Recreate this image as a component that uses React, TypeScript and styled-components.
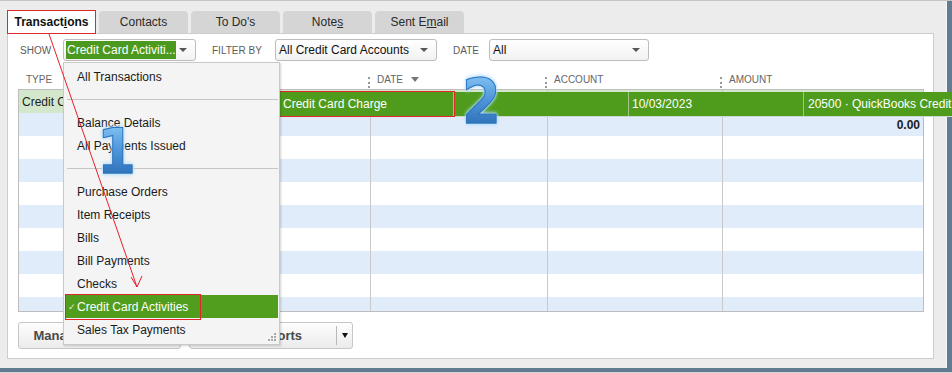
import React from 'react'
import styled, { createGlobalStyle } from 'styled-components'

const GlobalStyle = createGlobalStyle`
    html, body {
        margin: 0;
        padding: 0;
        background: #ececec;
    }
    body {
        font-family: "Liberation Sans", Arial, sans-serif;
    }
`

const Frame = styled.div`
    position: relative;
    width: 952px;
    height: 373px;
    overflow: hidden;
    display: flex;
    flex-direction: column;
    background: #ececec;
    font-family: "Liberation Sans", Arial, sans-serif;
    color: #1c1c1c;
`

const TopLine = styled.div`
    height: 1px;
    background: #c4c4c4;
`

const Body = styled.div`
    display: flex;
    flex: 1;
`

const Main = styled.div`
    flex: 1;
    padding: 9px 0 0 7px;
`

const RightBar = styled.div`
    width: 5px;
    border-left: 1px solid #f7f7f7;
    background: #617b91;
`

const BottomBar = styled.div`
    height: 5px;
    box-sizing: border-box;
    background: #617b91;
    border-bottom: 1px solid #d6d6d6;
`

const TabRow = styled.div`
    display: flex;
    align-items: flex-end;
    gap: 3px;
    height: 23px;
`

const Tab = styled.div<{ $active?: boolean }>`
    position: relative;
    z-index: 1;
    box-sizing: border-box;
    width: 89px;
    height: ${ ({ $active }) => $active ? '24px' : '22px' };
    margin-bottom: ${ ({ $active }) => $active ? '-1px' : '0' };
    display: flex;
    align-items: center;
    justify-content: center;
    background: ${ ({ $active }) => $active ? '#fff' : '#d5d5d5' };
    border: ${ ({ $active }) => $active ? '1px solid #e3262b' : 'none' };
    border-radius: ${ ({ $active }) => $active ? '0' : '4px 4px 0 0' };
    font-size: 12px;
    font-weight: ${ ({ $active }) => $active ? 700 : 400 };
    color: ${ ({ $active }) => $active ? '#111' : '#2a2a2a' };
`

const Panel = styled.div`
    position: relative;
    box-sizing: border-box;
    width: 927px;
    height: 326px;
    background: #fff;
    border: 1px solid #cdcdcd;
    padding: 0 9px 0 10px;
    display: flex;
    flex-direction: column;
`

const FilterRow = styled.div`
    display: flex;
    align-items: center;
    margin-top: 5px;
    height: 22px;
    padding-left: 2px;
`

const FilterLabel = styled.span<{ $w: number }>`
    width: ${ ({ $w }) => $w }px;
    font-size: 10px;
    color: #5c5c5c;
`

const Select = styled.div<{ $w: number }>`
    box-sizing: border-box;
    width: ${ ({ $w }) => $w }px;
    height: 22px;
    margin-right: 16px;
    padding: 0 2px;
    display: flex;
    align-items: center;
    border: 1px solid #bdbdbd;
    border-radius: 3px;
    background: linear-gradient(#ffffff, #f2f2f2);
    font-size: 12px;
    color: #111;
`

const SelectText = styled.span<{ $selected?: boolean }>`
    height: 18px;
    line-height: 18px;
    padding: 0 1px;
    width: ${ ({ $selected }) => $selected ? '108px' : 'auto' };
    background: ${ ({ $selected }) => $selected ? '#4b9a1f' : 'transparent' };
    color: ${ ({ $selected }) => $selected ? '#fff' : '#111' };
    white-space: nowrap;
`

const Caret = styled.span`
    margin-left: auto;
    margin-right: 6px;
    width: 0;
    height: 0;
    border-left: 4px solid transparent;
    border-right: 4px solid transparent;
    border-top: 4px solid #555;
`

const COLS = '177px 175px 177px 175px 1fr'

const HeadRow = styled.div`
    display: grid;
    grid-template-columns: ${ COLS };
    align-items: center;
    margin: 9px 1px 0 1px;
    height: 19px;
`

const HeadCell = styled.div<{ $first?: boolean }>`
    position: relative;
    display: flex;
    align-items: center;
    padding-left: ${ ({ $first }) => $first ? '7px' : '6px' };
    font-size: 10px;
    color: #666;

    &::before {
        content: '';
        display: ${ ({ $first }) => $first ? 'none' : 'block' };
        position: absolute;
        left: -3px;
        top: 3px;
        height: 11px;
        border-left: 2px dotted #999;
    }
`

const SortArrow = styled.span`
    margin-left: 8px;
    width: 0;
    height: 0;
    border-left: 4px solid transparent;
    border-right: 4px solid transparent;
    border-top: 5px solid #777;
`

const Table = styled.div`
    box-sizing: border-box;
    height: 223px;
    border: 1px solid #bdbdbd;
    overflow: hidden;
`

const Row = styled.div<{ $tone: 'green' | 'blue' | 'white' }>`
    display: grid;
    grid-template-columns: ${ COLS };
    height: 23px;
    background: ${ ({ $tone }) => $tone === 'green' ? '#d3e7cc' : $tone === 'blue' ? '#e1ecfb' : '#fff' };
`

const Cell = styled.div<{ $right?: boolean; $bold?: boolean }>`
    box-sizing: border-box;
    padding: 0 3px;
    line-height: 24px;
    font-size: 12px;
    font-weight: ${ ({ $bold }) => $bold ? 700 : 400 };
    text-align: ${ ({ $right }) => $right ? 'right' : 'left' };
    white-space: nowrap;
    overflow: hidden;
    border-right: 1px solid #c9c9c9;

    &:last-child {
        border-right: none;
    }
`

const ButtonRow = styled.div`
    display: flex;
    gap: 8px;
    margin-top: 10px;
`

const Button = styled.div<{ $w: number }>`
    box-sizing: border-box;
    width: ${ ({ $w }) => $w }px;
    height: 27px;
    display: flex;
    border: 1px solid #c6c6c6;
    border-radius: 3px;
    background: linear-gradient(#fefefe, #ebebeb);
    font-size: 13px;
    font-weight: 700;
    color: #4a4a4a;
`

const ButtonLabel = styled.span`
    flex: 1;
    display: flex;
    align-items: center;
    justify-content: center;
`

const ButtonDrop = styled.span`
    width: 15px;
    margin: 3px 0;
    border-left: 1px solid #b8b8b8;
    display: flex;
    align-items: center;
    justify-content: center;

    &::after {
        content: '';
        border-left: 3px solid transparent;
        border-right: 3px solid transparent;
        border-top: 5px solid #111;
    }
`

/* overlays: menu, dragged row, annotations */

const Menu = styled.div`
    position: absolute;
    left: 63px;
    top: 62px;
    z-index: 3;
    box-sizing: border-box;
    width: 217px;
    height: 283px;
    padding: 2px 0 3px;
    background: #f4f4f4;
    border: 1px solid #c9c9c9;
    box-shadow: 1px 1px 2px rgba(0, 0, 0, 0.18);
`

const MenuItem = styled.div<{ $checked?: boolean }>`
    position: relative;
    height: 23px;
    line-height: 25px;
    margin: 0 1px 0 2px;
    padding-left: 11px;
    font-size: 12px;
    color: ${ ({ $checked }) => $checked ? '#fff' : '#1a1a1a' };
    background: ${ ({ $checked }) => $checked ? '#519e1e' : 'transparent' };

    &::after {
        content: '';
        display: ${ ({ $checked }) => $checked ? 'block' : 'none' };
        position: absolute;
        left: -1px;
        top: -1px;
        width: 134px;
        height: 24px;
        border: 1px solid #e3262b;
    }
`

const Check = styled.span`
    position: absolute;
    left: 2px;
    top: 0;
    font-family: "DejaVu Sans", sans-serif;
    font-size: 9px;
    color: #e8e8e8;
`

const MenuSeparator = styled.div`
    height: 23px;
    display: flex;
    align-items: center;
    margin: 0 1px 0 3px;

    &::after {
        content: '';
        flex: 1;
        border-top: 1px solid #c6c6c6;
    }
`

const Grip = styled.svg`
    position: absolute;
    right: 3px;
    bottom: 3px;
`

const DragRow = styled.div`
    position: absolute;
    left: 280px;
    top: 92px;
    z-index: 2;
    width: 700px;
    height: 24px;
    display: flex;
    background: #4f9c1c;
    box-shadow: 0 1px 0 #cdd8cd;
    color: #fff;
    font-size: 12px;
`

const DragCell = styled.div<{ $w?: number; $marked?: boolean }>`
    box-sizing: border-box;
    flex: none;
    width: ${ ({ $w }) => $w ? `${ $w }px` : 'auto' };
    padding-left: ${ ({ $w }) => $w ? '3px' : '4px' };
    line-height: 24px;
    white-space: nowrap;
    border-right: ${ ({ $w }) => $w ? '1px solid rgba(255,255,255,0.45)' : 'none' };
    outline: ${ ({ $marked }) => $marked ? '1px solid #e3262b' : 'none' };
`

const StepMark = styled.span<{ $x: number; $y: number }>`
    position: absolute;
    left: ${ ({ $x }) => $x }px;
    top: ${ ({ $y }) => $y }px;
    z-index: 4;
    font-family: "DejaVu Sans", sans-serif;
    font-weight: 700;
    font-size: 62px;
    line-height: 1;
    transform: scaleX(0.9);
    transform-origin: left top;
    color: transparent;
    background: linear-gradient(#8ccaf6 0%, #4f97dc 45%, #2466ad 100%);
    -webkit-background-clip: text;
    background-clip: text;
    -webkit-text-stroke: 1px #2f74bb;
    filter: drop-shadow(0 0 1px #bfe4ff) drop-shadow(0 0 2px #a7d8ff);
`

const Annotation = styled.svg`
    position: absolute;
    left: 0;
    top: 0;
    z-index: 5;
    pointer-events: none;
`

const rows = [
    { type: 'Credit Card Charge', num: '', date: '10/03/2023', account: '20500 · QuickBooks Credit Card', amount: '' },
    { type: '', num: '', date: '', account: '', amount: '0.00' },
    ...Array.from({ length: 8 }, () => ({ type: '', num: '', date: '', account: '', amount: '' }))
]

const menuEntries = [
    'All Transactions', '-', 'Balance Details', 'All Payments Issued', '-',
    'Purchase Orders', 'Item Receipts', 'Bills', 'Bill Payments', 'Checks',
    'Credit Card Activities', 'Sales Tax Payments'
]

export default function App() {
    return (
        <Frame>
            <GlobalStyle />
            <TopLine />
            <Body>
                <Main>
                    <TabRow>
                        <Tab $active>Transact<u>i</u>ons</Tab>
                        <Tab>Contacts</Tab>
                        <Tab>To Do's</Tab>
                        <Tab>Note<u>s</u></Tab>
                        <Tab>Sent E<u>m</u>ail</Tab>
                    </TabRow>
                    <Panel>
                        <FilterRow>
                            <FilterLabel $w={ 43 }>SHOW</FilterLabel>
                            <Select $w={ 133 }>
                                <SelectText $selected>Credit Card Activiti...</SelectText>
                                <Caret />
                            </Select>
                            <FilterLabel $w={ 63 }>FILTER BY</FilterLabel>
                            <Select $w={ 162 }>
                                <SelectText>All Credit Card Accounts</SelectText>
                                <Caret />
                            </Select>
                            <FilterLabel $w={ 36 }>DATE</FilterLabel>
                            <Select $w={ 160 }>
                                <SelectText>All</SelectText>
                                <Caret />
                            </Select>
                        </FilterRow>

                        <HeadRow>
                            <HeadCell $first>TYPE</HeadCell>
                            <HeadCell>NUM</HeadCell>
                            <HeadCell>DATE<SortArrow /></HeadCell>
                            <HeadCell>ACCOUNT</HeadCell>
                            <HeadCell>AMOUNT</HeadCell>
                        </HeadRow>

                        <Table>
                            { rows.map((r, i) => (
                                <Row key={ i } $tone={ i === 0 ? 'green' : i % 2 ? 'blue' : 'white' }>
                                    <Cell>{ r.type }</Cell>
                                    <Cell>{ r.num }</Cell>
                                    <Cell>{ r.date }</Cell>
                                    <Cell>{ r.account }</Cell>
                                    <Cell $right $bold>{ r.amount }</Cell>
                                </Row>
                            )) }
                        </Table>

                        <ButtonRow>
                            <Button $w={ 163 }>
                                <ButtonLabel>Manage Transactions</ButtonLabel>
                            </Button>
                            <Button $w={ 164 }>
                                <ButtonLabel>Run Reports</ButtonLabel>
                                <ButtonDrop />
                            </Button>
                        </ButtonRow>
                    </Panel>
                </Main>
                <RightBar />
            </Body>
            <BottomBar />

            <Menu>
                { menuEntries.map((m, i) => m === '-'
                    ? <MenuSeparator key={ i } />
                    : (
                        <MenuItem key={ i } $checked={ m === 'Credit Card Activities' }>
                            { m === 'Credit Card Activities' && <Check>✓</Check> }
                            { m }
                        </MenuItem>
                    )) }
                <Grip width="9" height="9" viewBox="0 0 9 9">
                    <g fill="#a8a8a8">
                        <rect x="7" y="1" width="2" height="2" />
                        <rect x="4" y="4" width="2" height="2" />
                        <rect x="7" y="4" width="2" height="2" />
                        <rect x="1" y="7" width="2" height="2" />
                        <rect x="4" y="7" width="2" height="2" />
                        <rect x="7" y="7" width="2" height="2" />
                    </g>
                </Grip>
            </Menu>

            <DragRow>
                <DragCell $w={ 174 } $marked>Credit Card Charge</DragCell>
                <DragCell $w={ 175 } />
                <DragCell $w={ 175 }>10/03/2023</DragCell>
                <DragCell>20500 · QuickBooks Credit Card</DragCell>
            </DragRow>

            <StepMark $x={ 97 } $y={ 121 }>1</StepMark>
            <StepMark $x={ 462 } $y={ 71 }>2</StepMark>

            <Annotation width="952" height="373" viewBox="0 0 952 373">
                <line x1="49" y1="34" x2="137" y2="287" stroke="#e5202a" strokeWidth="1" />
                <polyline points="131,277 137,287 142,276" fill="none" stroke="#e5202a" strokeWidth="1" />
            </Annotation>
        </Frame>
    )
}
